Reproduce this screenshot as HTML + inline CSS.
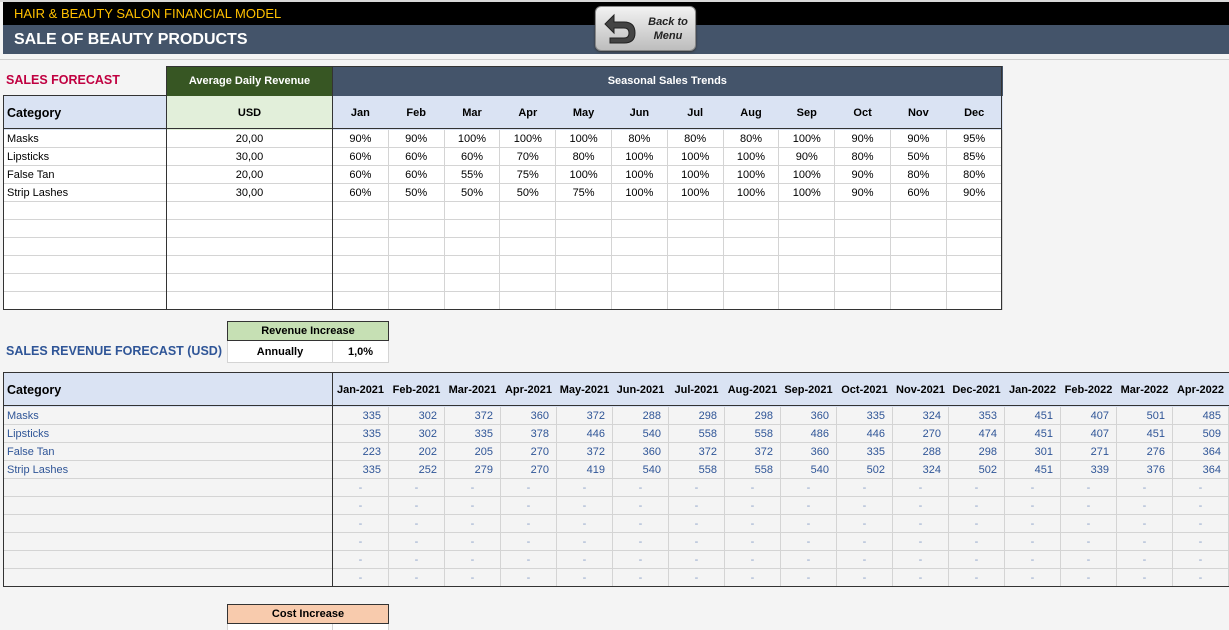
<!DOCTYPE html>
<html><head><meta charset="utf-8"><style>
*{margin:0;padding:0;box-sizing:border-box}
html,body{width:1229px;height:630px;overflow:hidden}
body{background:#f4f4f4;font-family:"Liberation Sans",Arial,sans-serif;font-size:11px;color:#000;position:relative}
.abs{position:absolute}
table{border-collapse:collapse;table-layout:fixed}
td{border:1px solid #d4d4d4;padding:0 3px;white-space:nowrap;overflow:hidden;line-height:16px}
.c{text-align:center}.r{text-align:right;padding-right:7px}
.b{font-weight:bold}
#t1 td{background:#fff}
#t2 td{color:#2f5597}
.dash{color:#8aa0c8 !important;text-align:center}
.h{background:#dae3f3 !important;border-color:#dae3f3 !important;font-size:11px}
.ln{position:absolute;background:#333;z-index:5}
</style></head><body>
<div class="abs" style="left:0;top:0;width:1229px;height:2px;background:#d8d8d8"></div>
<div class="abs" style="left:3px;top:2px;width:1226px;height:23px;background:#000;color:#ffc000;font-size:13px;line-height:23px;padding-left:11px">HAIR &amp; BEAUTY SALON FINANCIAL MODEL</div>
<div class="abs" style="left:3px;top:25px;width:1226px;height:29px;background:#44546a;color:#fff;font-size:16px;font-weight:bold;line-height:30px;padding-left:11px">SALE OF BEAUTY PRODUCTS</div>
<div class="abs" style="left:0;top:59px;width:1229px;height:1px;background:#cfcfcf"></div>
<div class="abs" style="left:595px;top:6px;width:101px;height:45px;border-radius:6px;background:linear-gradient(#f2f2f2,#bdbdbd);border:1px solid #888;box-shadow:0 1px 2px #333">
<svg class="abs" style="left:6px;top:4px" width="36" height="36" viewBox="0 0 36 36"><path d="M12 4 L3 13 L12 22 L12 17 L22 17 Q27 17 27 22 Q27 27 22 27 L8 27 L8 32 L22 32 Q33 32 33 22 Q33 11 22 11 L12 11 Z" fill="#444" stroke="#222" stroke-width="1"/></svg>
<div class="abs" style="left:50px;top:8px;font-size:11px;font-style:italic;font-weight:bold;color:#222;text-align:center;line-height:14px;width:44px">Back to<br>Menu</div></div>

<table id="t1" class="abs" style="left:3px;top:66px;width:999px">
<colgroup><col style="width:163px"><col style="width:166px"><col span="12" style="width:55.8px"></colgroup>
<tr style="height:29px"><td style="border:none;background:#f4f4f4"></td><td class="c b" style="background:#375623;color:#fff;border-color:#375623">Average Daily Revenue</td><td colspan="12" class="c b" style="background:#44546a;color:#fff;border-color:#44546a">Seasonal Sales Trends</td></tr>
<tr style="height:34px"><td class="b" style="background:#dae3f3;font-size:12.5px;border-color:#dae3f3">Category</td><td class="c b" style="background:#e2efda;font-size:11px;border-color:#e2efda">USD</td>
<td class="c b h">Jan</td><td class="c b h">Feb</td><td class="c b h">Mar</td><td class="c b h">Apr</td><td class="c b h">May</td><td class="c b h">Jun</td><td class="c b h">Jul</td><td class="c b h">Aug</td><td class="c b h">Sep</td><td class="c b h">Oct</td><td class="c b h">Nov</td><td class="c b h">Dec</td></tr>
<tr style="height:18px"><td>Masks</td><td class="c">20,00</td><td class="c">90%</td><td class="c">90%</td><td class="c">100%</td><td class="c">100%</td><td class="c">100%</td><td class="c">80%</td><td class="c">80%</td><td class="c">80%</td><td class="c">100%</td><td class="c">90%</td><td class="c">90%</td><td class="c">95%</td></tr>
<tr style="height:18px"><td>Lipsticks</td><td class="c">30,00</td><td class="c">60%</td><td class="c">60%</td><td class="c">60%</td><td class="c">70%</td><td class="c">80%</td><td class="c">100%</td><td class="c">100%</td><td class="c">100%</td><td class="c">90%</td><td class="c">80%</td><td class="c">50%</td><td class="c">85%</td></tr>
<tr style="height:18px"><td>False Tan</td><td class="c">20,00</td><td class="c">60%</td><td class="c">60%</td><td class="c">55%</td><td class="c">75%</td><td class="c">100%</td><td class="c">100%</td><td class="c">100%</td><td class="c">100%</td><td class="c">100%</td><td class="c">90%</td><td class="c">80%</td><td class="c">80%</td></tr>
<tr style="height:18px"><td>Strip Lashes</td><td class="c">30,00</td><td class="c">60%</td><td class="c">50%</td><td class="c">50%</td><td class="c">50%</td><td class="c">75%</td><td class="c">100%</td><td class="c">100%</td><td class="c">100%</td><td class="c">100%</td><td class="c">90%</td><td class="c">60%</td><td class="c">90%</td></tr>
<tr style="height:18px"><td></td><td></td><td></td><td></td><td></td><td></td><td></td><td></td><td></td><td></td><td></td><td></td><td></td><td></td></tr>
<tr style="height:18px"><td></td><td></td><td></td><td></td><td></td><td></td><td></td><td></td><td></td><td></td><td></td><td></td><td></td><td></td></tr>
<tr style="height:18px"><td></td><td></td><td></td><td></td><td></td><td></td><td></td><td></td><td></td><td></td><td></td><td></td><td></td><td></td></tr>
<tr style="height:18px"><td></td><td></td><td></td><td></td><td></td><td></td><td></td><td></td><td></td><td></td><td></td><td></td><td></td><td></td></tr>
<tr style="height:18px"><td></td><td></td><td></td><td></td><td></td><td></td><td></td><td></td><td></td><td></td><td></td><td></td><td></td><td></td></tr>
<tr style="height:18px"><td></td><td></td><td></td><td></td><td></td><td></td><td></td><td></td><td></td><td></td><td></td><td></td><td></td><td></td></tr>
</table>
<div class="abs b" style="left:6px;top:73px;color:#c00040;font-size:12.5px;z-index:6">SALES FORECAST</div>
<!-- table1 dark lines -->
<div class="ln" style="left:3px;top:95px;width:1px;height:215px"></div>
<div class="ln" style="left:3px;top:95px;width:163px;height:1px"></div>
<div class="ln" style="left:166px;top:66px;width:836px;height:1px"></div>
<div class="ln" style="left:166px;top:66px;width:1px;height:244px"></div>
<div class="ln" style="left:332px;top:66px;width:1px;height:244px"></div>
<div class="ln" style="left:1001px;top:66px;width:1px;height:244px"></div>
<div class="ln" style="left:3px;top:128px;width:999px;height:1px"></div>
<div class="ln" style="left:3px;top:309px;width:999px;height:1px"></div>

<table class="abs" style="left:227px;top:321px;width:161px;border:1px solid #333">
<colgroup><col style="width:105px"><col style="width:56px"></colgroup>
<tr style="height:19px"><td colspan="2" class="c b" style="background:#c6e0b4;border:1px solid #333">Revenue Increase</td></tr>
<tr style="height:22px"><td class="c b" style="background:#fff">Annually</td><td class="c b" style="background:#fff">1,0%</td></tr>
</table>
<div class="abs b" style="left:6px;top:344px;color:#2f5597;font-size:12.5px">SALES REVENUE FORECAST (USD)</div>

<div class="abs" style="left:3px;top:372px;width:1226px;height:216px;overflow:hidden">
<table id="t2" style="width:1281px">
<colgroup><col style="width:329px"><col span="17" style="width:56px"></colgroup>
<tr style="height:34px"><td class="b h" style="color:#000;font-size:12.5px">Category</td>
<td class="c b h" style="color:#000;padding:0">Jan-2021</td><td class="c b h" style="color:#000;padding:0">Feb-2021</td><td class="c b h" style="color:#000;padding:0">Mar-2021</td><td class="c b h" style="color:#000;padding:0">Apr-2021</td><td class="c b h" style="color:#000;padding:0">May-2021</td><td class="c b h" style="color:#000;padding:0">Jun-2021</td><td class="c b h" style="color:#000;padding:0">Jul-2021</td><td class="c b h" style="color:#000;padding:0">Aug-2021</td><td class="c b h" style="color:#000;padding:0">Sep-2021</td><td class="c b h" style="color:#000;padding:0">Oct-2021</td><td class="c b h" style="color:#000;padding:0">Nov-2021</td><td class="c b h" style="color:#000;padding:0">Dec-2021</td><td class="c b h" style="color:#000;padding:0">Jan-2022</td><td class="c b h" style="color:#000;padding:0">Feb-2022</td><td class="c b h" style="color:#000;padding:0">Mar-2022</td><td class="c b h" style="color:#000;padding:0">Apr-2022</td><td class="c b h" style="color:#000;padding:0">May-2022</td></tr>
<tr style="height:18px"><td>Masks</td><td class="r">335</td><td class="r">302</td><td class="r">372</td><td class="r">360</td><td class="r">372</td><td class="r">288</td><td class="r">298</td><td class="r">298</td><td class="r">360</td><td class="r">335</td><td class="r">324</td><td class="r">353</td><td class="r">451</td><td class="r">407</td><td class="r">501</td><td class="r">485</td><td class="r"></td></tr>
<tr style="height:18px"><td>Lipsticks</td><td class="r">335</td><td class="r">302</td><td class="r">335</td><td class="r">378</td><td class="r">446</td><td class="r">540</td><td class="r">558</td><td class="r">558</td><td class="r">486</td><td class="r">446</td><td class="r">270</td><td class="r">474</td><td class="r">451</td><td class="r">407</td><td class="r">451</td><td class="r">509</td><td class="r"></td></tr>
<tr style="height:18px"><td>False Tan</td><td class="r">223</td><td class="r">202</td><td class="r">205</td><td class="r">270</td><td class="r">372</td><td class="r">360</td><td class="r">372</td><td class="r">372</td><td class="r">360</td><td class="r">335</td><td class="r">288</td><td class="r">298</td><td class="r">301</td><td class="r">271</td><td class="r">276</td><td class="r">364</td><td class="r"></td></tr>
<tr style="height:18px"><td>Strip Lashes</td><td class="r">335</td><td class="r">252</td><td class="r">279</td><td class="r">270</td><td class="r">419</td><td class="r">540</td><td class="r">558</td><td class="r">558</td><td class="r">540</td><td class="r">502</td><td class="r">324</td><td class="r">502</td><td class="r">451</td><td class="r">339</td><td class="r">376</td><td class="r">364</td><td class="r"></td></tr>
<tr style="height:18px"><td></td><td class="dash">-</td><td class="dash">-</td><td class="dash">-</td><td class="dash">-</td><td class="dash">-</td><td class="dash">-</td><td class="dash">-</td><td class="dash">-</td><td class="dash">-</td><td class="dash">-</td><td class="dash">-</td><td class="dash">-</td><td class="dash">-</td><td class="dash">-</td><td class="dash">-</td><td class="dash">-</td><td class="dash">-</td></tr>
<tr style="height:18px"><td></td><td class="dash">-</td><td class="dash">-</td><td class="dash">-</td><td class="dash">-</td><td class="dash">-</td><td class="dash">-</td><td class="dash">-</td><td class="dash">-</td><td class="dash">-</td><td class="dash">-</td><td class="dash">-</td><td class="dash">-</td><td class="dash">-</td><td class="dash">-</td><td class="dash">-</td><td class="dash">-</td><td class="dash">-</td></tr>
<tr style="height:18px"><td></td><td class="dash">-</td><td class="dash">-</td><td class="dash">-</td><td class="dash">-</td><td class="dash">-</td><td class="dash">-</td><td class="dash">-</td><td class="dash">-</td><td class="dash">-</td><td class="dash">-</td><td class="dash">-</td><td class="dash">-</td><td class="dash">-</td><td class="dash">-</td><td class="dash">-</td><td class="dash">-</td><td class="dash">-</td></tr>
<tr style="height:18px"><td></td><td class="dash">-</td><td class="dash">-</td><td class="dash">-</td><td class="dash">-</td><td class="dash">-</td><td class="dash">-</td><td class="dash">-</td><td class="dash">-</td><td class="dash">-</td><td class="dash">-</td><td class="dash">-</td><td class="dash">-</td><td class="dash">-</td><td class="dash">-</td><td class="dash">-</td><td class="dash">-</td><td class="dash">-</td></tr>
<tr style="height:18px"><td></td><td class="dash">-</td><td class="dash">-</td><td class="dash">-</td><td class="dash">-</td><td class="dash">-</td><td class="dash">-</td><td class="dash">-</td><td class="dash">-</td><td class="dash">-</td><td class="dash">-</td><td class="dash">-</td><td class="dash">-</td><td class="dash">-</td><td class="dash">-</td><td class="dash">-</td><td class="dash">-</td><td class="dash">-</td></tr>
<tr style="height:18px"><td></td><td class="dash">-</td><td class="dash">-</td><td class="dash">-</td><td class="dash">-</td><td class="dash">-</td><td class="dash">-</td><td class="dash">-</td><td class="dash">-</td><td class="dash">-</td><td class="dash">-</td><td class="dash">-</td><td class="dash">-</td><td class="dash">-</td><td class="dash">-</td><td class="dash">-</td><td class="dash">-</td><td class="dash">-</td></tr>
</table></div>
<!-- table2 dark lines -->
<div class="ln" style="left:3px;top:372px;width:1226px;height:1px"></div>
<div class="ln" style="left:3px;top:372px;width:1px;height:215px"></div>
<div class="ln" style="left:332px;top:372px;width:1px;height:215px"></div>
<div class="ln" style="left:3px;top:405px;width:1226px;height:1px"></div>
<div class="ln" style="left:3px;top:586px;width:1226px;height:1px"></div>

<table class="abs" style="left:227px;top:604px;width:161px;border:1px solid #333">
<colgroup><col style="width:105px"><col style="width:56px"></colgroup>
<tr style="height:19px"><td colspan="2" class="c b" style="background:#f8cbad;border:1px solid #333">Cost Increase</td></tr>
<tr style="height:22px"><td style="background:#fff"></td><td style="background:#fff"></td></tr>
</table>
</body></html>
